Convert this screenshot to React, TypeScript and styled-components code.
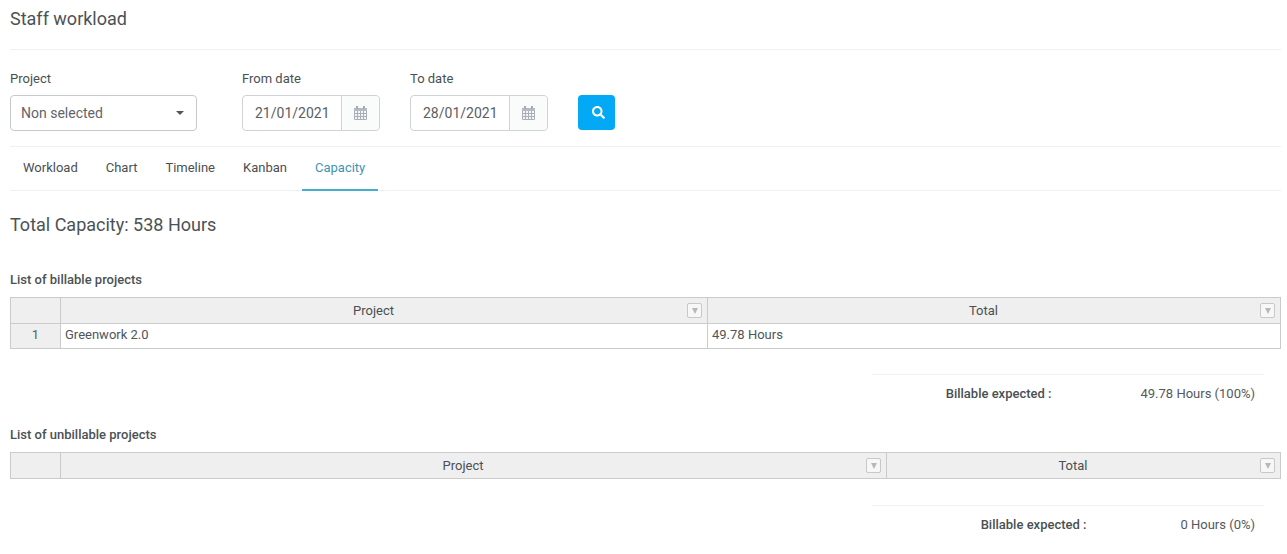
import React from "react";
import styled, { createGlobalStyle } from "styled-components";
import { FaSearch } from "react-icons/fa";

const GlobalStyle = createGlobalStyle`
  html, body {
    margin: 0;
    background: #fff;
    font-family: Roboto, "Liberation Sans", sans-serif;
    color: #4a4f52;
  }
  * { box-sizing: border-box; }
`;

const Page = styled.div`
  width: 1287px;
  height: 554px;
  padding: 0 6px 0 10px;
  overflow: hidden;
`;
const PageHeader = styled.div`
  height: 50px;
  padding-top: 8px;
  border-bottom: 1px solid #eef0f1;
`;
const PageTitle = styled.h1`
  margin: 0;
  font-size: 18px;
  line-height: 21px;
  font-weight: 400;
  color: #4b5256;
`;
const FilterBar = styled.div`
  display: flex;
  align-items: flex-start;
  height: 97px;
  padding-top: 21px;
  border-bottom: 1px solid #eef0f1;
`;
const Field = styled.div<{ $width: number; $gap: number }>`
  width: ${(p) => p.$width}px;
  margin-right: ${(p) => p.$gap}px;
`;
const FieldLabel = styled.label`
  display: block;
  height: 16px;
  margin-bottom: 8px;
  font-size: 13px;
  line-height: 16px;
  color: #4a4f52;
`;
const Select = styled.div`
  display: flex;
  align-items: center;
  justify-content: space-between;
  height: 36px;
  padding: 0 12px 0 10px;
  border: 1px solid #c6cacc;
  border-radius: 4px;
  font-size: 14px;
  color: #5f6569;
`;
const Caret = styled.span`
  width: 0;
  height: 0;
  border-left: 4px solid transparent;
  border-right: 4px solid transparent;
  border-top: 4px solid #555;
`;
const DateGroup = styled.div`
  display: flex;
  height: 36px;
  border: 1px solid #cfd3d5;
  border-radius: 4px;
`;
const DateInput = styled.div`
  flex: 1;
  padding-left: 12px;
  font-size: 14px;
  line-height: 34px;
  color: #5a6064;
`;
const DateAddon = styled.div`
  display: flex;
  align-items: center;
  justify-content: center;
  width: 38px;
  border-left: 1px solid #cfd3d5;
  border-radius: 0 4px 4px 0;
  background: #fafbfb;
`;
const SearchButton = styled.button`
  display: flex;
  align-items: center;
  justify-content: center;
  width: 37px;
  height: 35px;
  margin-top: 24px;
  padding: 0 0 0 3px;
  border: 0;
  border-radius: 4px;
  background: #03a9f4;
  color: #fff;
  font-size: 13px;
`;
const Tabs = styled.div`
  display: flex;
  height: 44px;
  border-bottom: 1px solid #eef0f1;
`;
const Tab = styled.div<{ $active?: boolean }>`
  height: 44px;
  padding: 0 13px;
  margin-right: 2px;
  font-size: 13px;
  line-height: 42px;
  color: ${(p) => (p.$active ? "#3f93b5" : "#4a4f52")};
  border-bottom: 2px solid ${(p) => (p.$active ? "#45aecf" : "transparent")};
`;
const CapacityTitle = styled.h2`
  margin: 23px 0 0;
  height: 21px;
  font-size: 18px;
  line-height: 21px;
  font-weight: 400;
  color: #4b5256;
`;
const SectionTitle = styled.h3<{ $top: number }>`
  margin: ${(p) => p.$top}px 0 9px;
  height: 16px;
  font-size: 13px;
  line-height: 16px;
  font-weight: 500;
  color: #4c5154;
`;
const Grid = styled.table`
  width: 1270px;
  border-collapse: collapse;
  table-layout: fixed;
  font-size: 13px;
`;
const HeadCell = styled.th`
  position: relative;
  height: 26px;
  padding: 0 21px 0 0;
  border: 1px solid #cbcbcb;
  background: #efefef;
  font-weight: 400;
  line-height: 24px;
  color: #4a4f52;
`;
const CornerCell = styled(HeadCell)`
  padding: 0;
`;
const RowHead = styled.td`
  height: 25px;
  padding: 0 0 3px;
  border: 1px solid #cbcbcb;
  background: #efefef;
  text-align: center;
  color: #5a6064;
`;
const Cell = styled.td`
  height: 25px;
  padding: 0 4px 3px;
  border: 1px solid #cbcbcb;
  color: #4f5558;
`;
const FilterIcon = styled.span`
  position: absolute;
  top: 5px;
  right: 5px;
  display: flex;
  align-items: center;
  justify-content: center;
  width: 15px;
  height: 15px;
  border: 1px solid #c8c8c8;
  border-radius: 2px;
  background: #f7f7f7;
  &::before {
    content: "";
    border-left: 3px solid transparent;
    border-right: 3px solid transparent;
    border-top: 6px solid #b8b8b8;
  }
`;
const Summary = styled.div<{ $top: number }>`
  width: 392px;
  height: 38px;
  margin: ${(p) => p.$top}px 0 0 862px;
  padding-right: 9px;
  display: flex;
  justify-content: flex-end;
  align-items: center;
  border-top: 1px solid #eef0f1;
  font-size: 13px;
`;
const SummaryLabel = styled.span<{ $gap: number }>`
  margin-right: ${(p) => p.$gap}px;
  font-weight: 500;
  color: #4a4f52;
`;
const SummaryValue = styled.span`
  color: #53595c;
`;

const CalendarIcon = () => (
  <svg width="13" height="14" viewBox="0 0 13 14" fill="none" aria-hidden="true">
    <path d="M0 2h13v3H0z" fill="#b4bac0" />
    <path d="M2 0h2v3H2zM9 0h2v3H9z" fill="#a4abb2" />
    <path d="M0.5 5v8.5h12V5" fill="#f2f4f5" />
    <path
      d="M0.5 5v8.5h12V5M3.5 5v8M6.5 5v8M9.5 5v8M0.5 7.5h12M0.5 10.5h12"
      stroke="#aab0b7"
      strokeWidth="1"
    />
  </svg>
);

type Col = { title: string; width: number };

const ProjectTable = ({ cols, row }: { cols: Col[]; row?: string[] }) => (
  <Grid>
    <colgroup>
      <col style={{ width: 50 }} />
      {cols.map((c) => (
        <col key={c.title} style={{ width: c.width }} />
      ))}
    </colgroup>
    <thead>
      <tr>
        <CornerCell />
        {cols.map((c) => (
          <HeadCell key={c.title}>
            {c.title}
            <FilterIcon />
          </HeadCell>
        ))}
      </tr>
    </thead>
    {row && (
      <tbody>
        <tr>
          <RowHead>1</RowHead>
          {row.map((v) => (
            <Cell key={v}>{v}</Cell>
          ))}
        </tr>
      </tbody>
    )}
  </Grid>
);

export default function App() {
  return (
    <Page>
      <GlobalStyle />
      <PageHeader>
        <PageTitle>Staff workload</PageTitle>
      </PageHeader>
      <FilterBar>
        <Field $width={187} $gap={45}>
          <FieldLabel>Project</FieldLabel>
          <Select>
            Non selected
            <Caret />
          </Select>
        </Field>
        <Field $width={138} $gap={30}>
          <FieldLabel>From date</FieldLabel>
          <DateGroup>
            <DateInput>21/01/2021</DateInput>
            <DateAddon>
              <CalendarIcon />
            </DateAddon>
          </DateGroup>
        </Field>
        <Field $width={138} $gap={30}>
          <FieldLabel>To date</FieldLabel>
          <DateGroup>
            <DateInput>28/01/2021</DateInput>
            <DateAddon>
              <CalendarIcon />
            </DateAddon>
          </DateGroup>
        </Field>
        <SearchButton>
          <FaSearch />
        </SearchButton>
      </FilterBar>
      <Tabs>
        <Tab>Workload</Tab>
        <Tab>Chart</Tab>
        <Tab>Timeline</Tab>
        <Tab>Kanban</Tab>
        <Tab $active>Capacity</Tab>
      </Tabs>
      <CapacityTitle>Total Capacity: 538 Hours</CapacityTitle>
      <SectionTitle $top={37}>List of billable projects</SectionTitle>
      <ProjectTable
        cols={[
          { title: "Project", width: 647 },
          { title: "Total", width: 573 },
        ]}
        row={["Greenwork 2.0", "49.78 Hours"]}
      />
      <Summary $top={25}>
        <SummaryLabel $gap={89}>Billable expected :</SummaryLabel>
        <SummaryValue>49.78 Hours (100%)</SummaryValue>
      </Summary>
      <SectionTitle $top={15}>List of unbillable projects</SectionTitle>
      <ProjectTable
        cols={[
          { title: "Project", width: 826 },
          { title: "Total", width: 394 },
        ]}
      />
      <Summary $top={26}>
        <SummaryLabel $gap={94}>Billable expected :</SummaryLabel>
        <SummaryValue>0 Hours (0%)</SummaryValue>
      </Summary>
    </Page>
  );
}
